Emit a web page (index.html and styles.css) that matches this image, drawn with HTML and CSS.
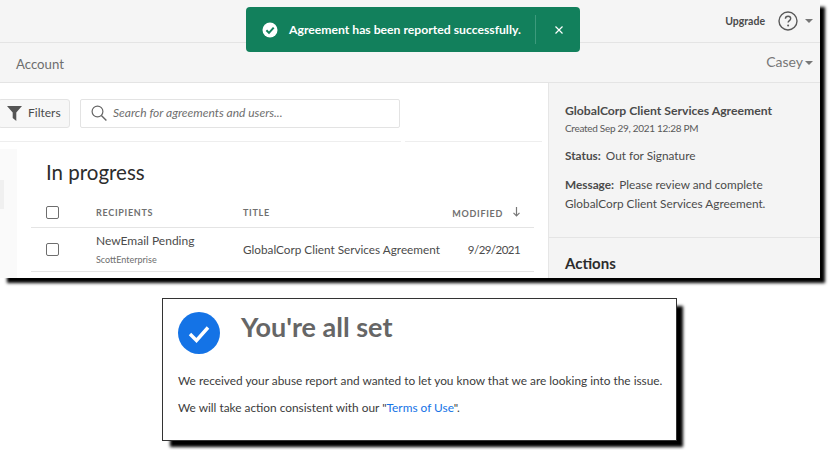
FILE: index.html
```html
<!DOCTYPE html>
<html lang="en">
<head>
<meta charset="utf-8">
<title>Agreement reported</title>
<link rel="stylesheet" href="styles.css">
</head>
<body>
<section class="window">
  <header class="topbar">
    <span class="upgrade">Upgrade</span>
    <svg class="help" width="20" height="20" viewBox="0 0 20 20" aria-hidden="true"><circle cx="10" cy="10" r="9" fill="none" stroke="#5a5a5a" stroke-width="1.4"/><path d="M7.4 7.800c0-1.600 1.200-2.500 2.700-2.500 1.500 0 2.600.9 2.600 2.200 0 1-.5 1.500-1.300 2.100-.8.6-1.300 1-1.300 2" fill="none" stroke="#5a5a5a" stroke-width="1.4"/><circle cx="10.100" cy="14.400" r="1" fill="#5a5a5a"/></svg>
    <span class="caret caret-top"></span>
  </header>
  <div class="subbar">
    <span class="account">Account</span>
    <span class="casey">Casey<span class="caret"></span></span>
  </div>
  <div class="toast">
    <svg class="toast-icon" width="16" height="16" viewBox="0 0 16 16" aria-hidden="true"><circle cx="8" cy="8" r="7.500" fill="#fff"/><path d="M4.400 8.200l2.600 2.700 4.700-5.200" fill="none" stroke="#12805c" stroke-width="2"/></svg>
    <span class="toast-text">Agreement has been reported successfully.</span>
    <span class="toast-sep"></span>
    <svg class="toast-x" width="10" height="10" viewBox="0 0 10 10" aria-hidden="true"><path d="M1.500 1.500l7 7M8.500 1.500l-7 7" stroke="#fff" stroke-width="1.200" fill="none"/></svg>
  </div>
  <div class="body">
    <main class="main">
      <div class="tools">
        <button class="filters" type="button">
          <svg width="15" height="16" viewBox="0 0 15 16" aria-hidden="true"><path d="M0 1h15L9.300 7.600V16L5.700 13V7.600z" fill="#555"/></svg>
          Filters
        </button>
        <div class="search">
          <svg width="16" height="16" viewBox="0 0 16 16" aria-hidden="true"><circle cx="6.500" cy="6.500" r="5.400" fill="none" stroke="#666" stroke-width="1.200"/><path d="M10.400 10.400l5 5" stroke="#666" stroke-width="1.400"/></svg>
          <span>Search for agreements and users...</span>
        </div>
      </div>
      <div class="content">
        <aside class="rail"><span class="rail-tab"></span></aside>
        <div class="list">
          <h1>In progress</h1>
          <div class="row head">
            <span class="check"></span>
            <span class="col-rec">RECIPIENTS</span>
            <span class="col-title">TITLE</span>
            <span class="col-mod">MODIFIED<svg width="7" height="10" viewBox="0 0 7 10" aria-hidden="true"><path d="M3.500 0v9M.5 5.800l3 3 3-3" fill="none" stroke="#777" stroke-width="1.200"/></svg></span>
          </div>
          <div class="row item">
            <span class="check"></span>
            <span class="col-rec">
              <span class="name">NewEmail Pending</span>
              <span class="org">ScottEnterprise</span>
            </span>
            <span class="col-title">GlobalCorp Client Services Agreement</span>
            <span class="col-mod date">9/29/2021</span>
          </div>
        </div>
      </div>
    </main>
    <aside class="panel">
      <div class="panel-info">
        <h2>GlobalCorp Client Services Agreement</h2>
        <p class="created">Created Sep 29, 2021 12:28 PM</p>
        <p class="status"><b>Status:</b> <span>Out for Signature</span></p>
        <p class="message"><b>Message:</b> <span>Please review and complete</span></p>
        <p class="message-rest">GlobalCorp Client Services Agreement.</p>
      </div>
      <h3>Actions</h3>
    </aside>
  </div>
</section>
<section class="card">
  <div class="card-head">
    <svg width="42" height="42" viewBox="0 0 42 42" aria-hidden="true"><circle cx="21" cy="21" r="21" fill="#1473e6"/><path d="M12 22l6.500 6.500L30 15.500" fill="none" stroke="#fff" stroke-width="3.400"/></svg>
    <h2>You're all set</h2>
  </div>
  <p>We received your abuse report and wanted to let you know that we are looking into the issue.</p>
  <p>We will take action consistent with our "<a href="#">Terms of Use</a>".</p>
</section>
</body>
</html>
```
FILE: styles.css
```css
* { box-sizing: border-box; }
html, body { margin: 0; padding: 0; }
body {
  width: 830px;
  height: 450px;
  overflow: hidden;
  background: #fff;
  font-family: "Lato", "Noto Sans", sans-serif;
  color: #4b4b4b;
}
.window {
  position: relative;
  width: 820px;
  height: 278px;
  background: #fff;
  box-shadow: 6px 6px 3px -1px #000;
}
.topbar {
  height: 43px;
  background: #f5f5f5;
  border-bottom: 1px solid #e4e4e4;
  display: flex;
  align-items: center;
  justify-content: flex-end;
  padding-right: 7px;
}
.upgrade { font-size: 10.500px; font-weight: 700; color: #4b4b4b; margin-right: 13px; }
.help { margin-right: 7px; }
.caret {
  display: inline-block;
  width: 0;
  height: 0;
  border-left: 4.500px solid transparent;
  border-right: 4.500px solid transparent;
  border-top: 4px solid #777;
  margin-left: 2px;
  vertical-align: middle;
}
.caret-top { margin-left: 0; }
.subbar {
  height: 40px;
  background: #f5f5f5;
  border-bottom: 1px solid #e4e4e4;
  display: flex;
  align-items: center;
  justify-content: space-between;
  padding: 0 7px 2px 16px;
}
.account { font-size: 13.200px; color: #6e6e6e; margin-top: 4px; }
.casey { font-size: 14px; color: #777; }
.toast {
  position: absolute;
  left: 246px;
  top: 7px;
  width: 334px;
  height: 45px;
  background: #12805c;
  border-radius: 4px;
  display: flex;
  align-items: center;
  padding-left: 16px;
  color: #fff;
}
.toast-text { font-size: 12.200px; font-weight: 700; margin-left: 11px; width: 238px; white-space: nowrap; }
.toast-sep { width: 1px; height: 29px; background: #3d9a7c; margin-left: 8px; }
.toast-x { margin-left: 18px; }
.body { display: flex; height: 195px; }
.main { width: 548px; overflow: hidden; }
.tools {
  position: relative;
  height: 59px;
  display: flex;
  align-items: flex-start;
  padding-top: 16px;
  border-bottom: 1px solid #eee;
  margin-right: 6px;
}
.tools::after {
  content: "";
  position: absolute;
  left: 401px;
  bottom: -1px;
  width: 4px;
  height: 1px;
  background: #fff;
}
.filters {
  width: 72px;
  height: 29px;
  margin-left: -2px;
  background: #f7f7f7;
  border: 1px solid #e3e3e3;
  border-radius: 3px;
  display: flex;
  align-items: center;
  gap: 6px;
  padding: 0 0 2px 8px;
  font: 12px "Lato", sans-serif;
  color: #4b4b4b;
}
.search {
  width: 320px;
  height: 29px;
  margin-left: 10px;
  background: #fff;
  border: 1px solid #e3e3e3;
  border-radius: 2px;
  display: flex;
  align-items: center;
  gap: 6px;
  padding: 0 0 2px 10px;
  font-size: 12px;
  font-style: italic;
  color: #6e6e6e;
}
.content { display: flex; height: 136px; padding-top: 7px; }
.rail { width: 17px; background: #fafafa; padding-top: 31px; }
.rail-tab { display: block; width: 4px; height: 29px; background: #f0f0f0; }
.list { width: 503px; margin-left: 14px; }
h1 { margin: 0; padding: 11px 0 0 15px; height: 51px; font-size: 20.500px; font-weight: 400; color: #2c2c2c; }
.row { display: flex; align-items: center; border-bottom: 1px solid #e4e4e4; padding-left: 15px; }
.head { height: 28px; padding-bottom: 2px; font-size: 9px; font-weight: 700; letter-spacing: 0.7px; color: #707070; }
.item { height: 44px; font-size: 11.750px; color: #4b4b4b; }
.check { width: 13px; height: 13px; border: 1.500px solid #6e6e6e; border-radius: 2px; }
.col-rec { width: 147px; margin-left: 37px; }
.item .col-rec { margin-top: -2px; }
.col-title { flex: 1; white-space: nowrap; }
.col-mod { width: 91px; text-align: right; padding-right: 14px; white-space: nowrap; }
.col-mod svg { margin-left: 10px; }
.date { font-size: 11.500px; letter-spacing: -0.550px; }
.name { display: block; font-size: 12px; }
.org { display: block; font-size: 9px; color: #6e6e6e; margin-top: 6px; }
.panel { width: 272px; background: #f4f4f4; border-left: 1px solid #e6e6e6; overflow: hidden; }
.panel-info { height: 155px; padding: 20px 16px 0; border-bottom: 1px solid #e4e4e4; font-size: 11.800px; }
.panel-info h2 { margin: 0; font-size: 12.200px; font-weight: 700; color: #4b4b4b; }
.created { margin: 4px 0 0; font-size: 10px; letter-spacing: -0.300px; color: #5a5a5a; }
.status { margin: 14px 0 0; }
.message { margin: 12px 0 0; line-height: 19px; }
.message-rest { margin: 0; line-height: 19px; }
.panel b { font-weight: 700; color: #4b4b4b; margin-right: 2px; }
h3 { margin: 16px 0 0 16px; font-size: 15px; font-weight: 700; color: #2c2c2c; }
.card {
  width: 515px;
  height: 143px;
  margin: 20px 0 0 162px;
  background: #fff;
  border: 1px solid #333;
  box-shadow: 7px 7px 3px -1px #000;
  padding: 13px 0 0 15px;
  font-size: 11.850px;
  color: #3c3c3c;
}
.card-head { display: flex; align-items: flex-start; gap: 21px; height: 61px; }
.card-head h2 { margin: 0; font-size: 27px; font-weight: 700; color: #666; line-height: 30px; }
.card p { margin: 0 0 12px; line-height: 15px; }
.card a { color: #1473e6; text-decoration: none; }
```
